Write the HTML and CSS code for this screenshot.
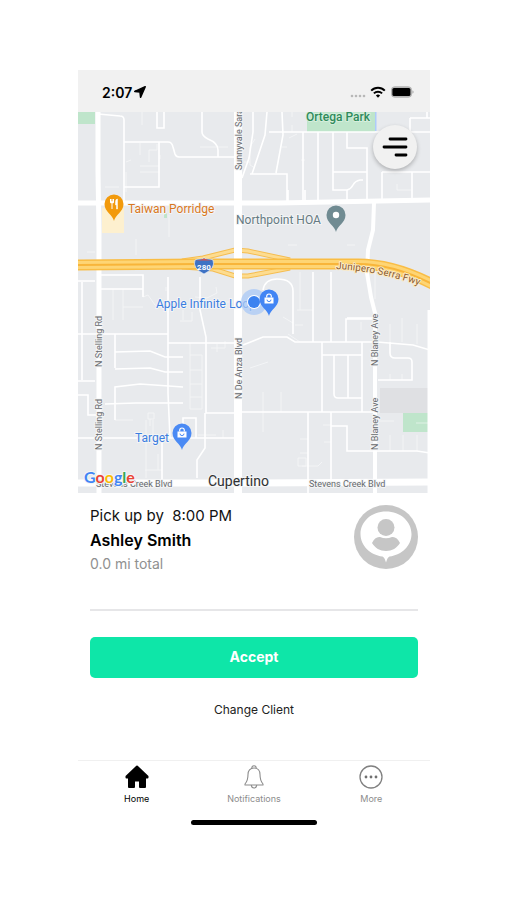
FILE: index.html
```
<!DOCTYPE html>
<html lang="en">

<head>
  <meta charset="UTF-8">
  <meta name="viewport" content="width=device-width, initial-scale=1.0">
  <title>Pick up</title>
  <link rel="stylesheet" href="styles.css">
</head>

<body>
  <div class="phone">
    <header class="status-bar">
      <div class="status-time">
        <span>2:07</span>
        <svg width="12" height="12" viewBox="0 0 12 12" aria-hidden="true">
          <path d="M11.2.8 6.6 11.2 6 6 .8 5.4z" fill="#000" stroke="#000" stroke-width="1.6" stroke-linejoin="round"/>
        </svg>
      </div>
      <div class="status-icons">
        <svg width="16" height="12" viewBox="0 0 16 12" aria-hidden="true">
          <g fill="#b8b8b8">
            <circle cx="2" cy="10" r="1.3"/>
            <circle cx="6" cy="10" r="1.3"/>
            <circle cx="10" cy="10" r="1.3"/>
            <circle cx="14" cy="10" r="1.3"/>
          </g>
        </svg>
        <svg width="16" height="12" viewBox="0 0 16 12" aria-hidden="true">
          <g fill="none" stroke="#000" stroke-width="2">
            <path d="M1.2 4.6a9.6 9.6 0 0 1 13.6 0"/>
            <path d="M3.9 7.4a5.8 5.8 0 0 1 8.2 0"/>
          </g>
          <path d="M8 11.7 5.9 9.5a3 3 0 0 1 4.2 0z"/>
        </svg>
        <svg width="24" height="12" viewBox="0 0 24 12" aria-hidden="true">
          <rect x="1.500" y=".8" width="20" height="10.4" rx="3" fill="#b5b5b5" stroke="#b5b5b5"/>
          <rect x="2.400" y="2" width="18" height="8" rx="1.6"/>
          <path d="M22.400 4.2q1.200.6 1.200 1.8t-1.200 1.8z" fill="#a9a9a9"/>
        </svg>
      </div>
    </header>

    <div class="map">
      <svg class="map-canvas" viewBox="0 0 352 381" role="img" aria-label="Map of Cupertino">
        <rect width="352" height="381" fill="#e8eaed"/>

        <!-- parks and blocks -->
        <g fill="#bfe5cb">
          <path d="M0 0h17v12H0z"/>
          <path d="M229 0h68v20h-68z"/>
          <path d="M325 301h26v19h-26z"/>
          <path d="M86 101h3v5h-3z"/>
        </g>
        <path d="M297 0h1.5v19H297z" fill="#aecbfa"/>
        <path d="M302 276h50v25h-50z" fill="#dfe0e3"/>
        <path d="M24 96h22v25H24z" fill="#fdf0cf"/>

        <!-- side streets -->
        <g class="street-thin">
          <path d="M64 0v13M62 31v12M62 54h19M62 60h20M71 38h8v-6M71 38v12M122 35h28M82 47v-4M48 50l5-2"/>
          <path d="M172 50h-6M177 27l-5 8v18l5 3M204 35h5M214 13v7M214 0v5M227 48h-4M211 26l8-4M319 78h14M319 72v6"/>
          <path d="M91 103v22M86 103v-6M219 133h-9M277 133h-8M48 60v20M58 127v16M9 140h8M27 75h14"/>
          <path d="M65 185l5-2 7 10 12 4M88 179v-4M117 185l12 1 10-5-1-6M155 190h-10v6M35 177v31M45 177v31M45 195h20"/>
          <path d="M112 231v66M112 243h12v54h-12M112 258h12M112 272h12M112 285h12M102 209h12v-9M105 198v10M133 236h14v-7M139 232v8"/>
          <path d="M70 301h6v6h-6zM72 307v7M68 308v58M67 358h17M75 326v-18M80 342v16M145 326v-8M120 323h18"/>
          <path d="M185 280v40M203 280v20M172 256l18-6M210 222l12 8M217 213h8M205 205l10 6M222 341h8M222 346h6v8h-8v-8zM224 354h16l4-4M222 327h8M245 313h8M246 330h7"/>
          <path d="M312 323v16M325 323v16M339 323v16M324 206v24M312 212v18M339 212v20M324 268v-6M312 268v-6M300 309h16M338 311h14M283 210v8"/>
          <path d="M297 158v29M222 160v38M37 308h18M153 140h8M235 198h-16"/>
        </g>
        <g class="street">
          <path d="M20 2l22 2q4 0 4 4v83M46 30h44q4 0 5 5l2 7q1 3 4 3h56M79 0v16h7V0M124 0v20q0 4 6 7 10 4 10 11v7M81 30v45H46"/>
          <path d="M175 0v20l-4 26-7 20M189 0l-2 23-13 39M204 0l1 23-7 38M172 62h37v29M191 20h161M240 20v71M225 20v71M255 20v58h14q4-1 6-5 2-4 7-5h3M269 20v16h20v55M255 60h34"/>
          <path d="M304 60h48M304 60v30M334 60v30M332 6h20M349 0v6M332 6v14M210 78v13M227 78v13M269 78v13"/>
          <path d="M235 160v70M253 160v70M185 178q2-11 14-11 16 0 16 12v43M269 206h28M0 169h17M4 170v98M22 163h43v22M22 177h43"/>
          <path d="M0 222h90M37 222v34M37 240l35-1 15 6h18M37 257l35-1 15 4h18M37 308v-33l25-3 43 3M27 292l31-1h47"/>
          <path d="M90 165v116l2 45M90 231h66M122 165v33l6 27v76h29M17 269H0M0 283h10v20h10M0 326h156M127 301v35l-8 12v18M105 320v-14h13v20M84 326v42"/>
          <path d="M165 233l20-8h24l8 5h82l36 3 17 5M244 230v70M244 243h40M284 230v70M256 243v39q0 4 4 4h24M270 243v43M163 300h134M268 230v-23h29"/>
          <path d="M312 230v11q0 5 5 5h13q4 0 4 4v18h-34M230 300v81M253 300v68M253 314h16v25h70l13 2"/>
        </g>

        <!-- freeway ramps -->
        <g class="ramp-edge">
          <path d="M104 149l21-3 32-8 13 1 42 9M104 155l31 2 22 7h13l42-8"/>
        </g>
        <g class="ramp">
          <path d="M104 149l21-3 32-8 13 1 42 9M104 155l31 2 22 7h13l42-8"/>
        </g>

        <!-- main roads -->
        <g fill="none" stroke="#fff">
          <path d="M20 0v60l1 60v261" stroke-width="5"/>
          <path d="M296 91l-1 27-5 20-1 23 4 24 4 16v180" stroke-width="4"/>
          <path d="M160 0v381" stroke-width="8"/>
          <path d="M0 91h200l152-3" stroke-width="5"/>
          <path d="M0 371h160l192-1" stroke-width="7"/>
          <path d="M351 198v183" stroke-width="3"/>
        </g>

        <!-- freeway -->
        <g fill="none">
          <path d="M0 153l120-1h160q36 0 76 21" stroke="#f9bd45" stroke-width="11"/>
          <path d="M0 153l120-1h160q36 0 76 21" stroke="#fed574" stroke-width="8"/>
          <path d="M0 153l120-1h160q36 0 76 21" stroke="#f8b53a" stroke-width="2"/>
        </g>
        <path d="M117 148q2-1 4-1 3 0 5-1 2 1 5 1 2 0 4 1 3 8-9 14-12-6-9-14z" fill="#3e72c4" stroke="#fff" stroke-width=".6"/>
        <path d="M117.500 148.500q5 0 8.500-2 4 2 8.500 2z" fill="#d9534a"/>
        <text class="shield" x="126" y="158" text-anchor="middle">280</text>

        <!-- road names -->
        <path id="fwy-line" d="M258 157q48 2 98 22" fill="none"/>
        <g class="road-name">
          <text transform="translate(164 58) rotate(-90)">Sunnyvale Saratoga Rd</text>
          <text transform="translate(24 255) rotate(-90)">N Stelling Rd</text>
          <text transform="translate(24 338) rotate(-90)">N Stelling Rd</text>
          <text transform="translate(164 287) rotate(-90)">N De Anza Blvd</text>
          <text transform="translate(300 254) rotate(-90)">N Blaney Ave</text>
          <text transform="translate(300 338) rotate(-90)">N Blaney Ave</text>
          <text x="18" y="375">Stevens Creek Blvd</text>
          <text x="231" y="375">Stevens Creek Blvd</text>
        </g>
        <text class="fwy-name"><textPath href="#fwy-line">Junipero Serra Fwy</textPath></text>

        <!-- places -->
        <g class="place">
          <text class="park" x="228" y="9">Ortega Park</text>
          <text class="food" x="50" y="101">Taiwan Porridge</text>
          <text class="civic" x="158" y="112">Northpoint HOA</text>
          <text class="shop" x="78" y="196">Apple Infinite Loop</text>
          <text class="shop" x="57" y="330">Target</text>
        </g>
        <text class="city" x="130" y="374">Cupertino</text>

        <!-- current location -->
        <circle cx="176" cy="190" r="13" fill="#a9c8f5" opacity=".75"/>
        <circle cx="176" cy="190" r="7" fill="#fff"/>
        <circle cx="176" cy="190" r="6" fill="#3b82f0"/>

        <!-- pins -->
        <defs>
          <path id="pin" d="M0 17C-1 11-9.500 8-9.500 0a9.500 9.500 0 0 1 19 0C9.500 8 1 11 0 17z"/>
          <g id="bag">
            <path d="M-4.500-1.500h9v6h-9z" fill="#fff"/>
            <path d="M-2.300-1.500v-1.200a2.300 2.300 0 0 1 4.600 0v1.200" fill="none" stroke="#fff" stroke-width="1.2"/>
            <path d="M-2 .6a2 2 0 0 0 4 0" fill="none" stroke="#4a8af4"/>
          </g>
        </defs>
        <g transform="translate(36 92)">
          <use href="#pin" fill="#f29a0c"/>
          <path d="M-3.500-5v3.500M-2-5v3.500M-.5-5v3.500M-2-2v7" fill="none" stroke="#fff"/>
          <path d="M-3.500-2.500h3v1.500h-3zM3.500-5v10h-1V1H1.500v-3q0-3 2-3z" fill="#fff" stroke="#fff" stroke-width=".5"/>
        </g>
        <g transform="translate(258 103)">
          <use href="#pin" fill="#708b92"/>
          <circle r="3.200" fill="#fff"/>
        </g>
        <g transform="translate(191 187)">
          <use href="#pin" fill="#4285f4"/>
          <use href="#bag"/>
        </g>
        <g transform="translate(104 321)">
          <use href="#pin" fill="#4a8af4"/>
          <use href="#bag"/>
        </g>

        <text class="google" x="6" y="371"><tspan fill="#4285f4">G</tspan><tspan fill="#ea4335">o</tspan><tspan fill="#fbbc05">o</tspan><tspan fill="#4285f4">g</tspan><tspan fill="#34a853">l</tspan><tspan fill="#ea4335">e</tspan></text>
      </svg>

      <button class="menu-button" type="button" aria-label="Menu">
        <svg width="26" height="20" viewBox="0 0 26 20" aria-hidden="true">
          <path d="M8 2h16M2 10h22M14 18h10" fill="none" stroke="#000" stroke-width="2.800" stroke-linecap="round"/>
        </svg>
      </button>
    </div>

    <main class="ride">
      <section class="client">
        <div class="client-info">
          <p class="pickup">Pick up by&nbsp; 8:00 PM</p>
          <h1 class="client-name">Ashley Smith</h1>
          <p class="distance">0.0 mi total</p>
        </div>
        <svg class="avatar" width="64" height="64" viewBox="0 0 64 64" aria-hidden="true">
          <circle cx="32" cy="32" r="32" fill="#c6c6c6"/>
          <path d="M32 6.500c14.500 0 25.500 10 25.500 22.500 0 11.500-9.500 21-22 22.500-2 .8-2.500 3.500-3.500 6-1-2.500-1.500-5.200-3.500-6C16 50 6.500 40.500 6.500 29 6.500 16.500 17.500 6.500 32 6.500z" fill="#fff"/>
          <circle cx="32" cy="22.500" r="8.500" fill="#c6c6c6"/>
          <path d="M18 38c2-4.500 5-6.500 8-6 4 1.600 8 1.600 12 0 3-.5 6 1.500 8 6-3 5-8 8-14 8s-11-3-14-8z" fill="#c6c6c6"/>
        </svg>
      </section>
      <hr class="divider">
      <button class="accept" type="button">Accept</button>
      <button class="change" type="button">Change Client</button>
    </main>

    <nav class="tab-bar">
      <a class="tab active" href="#home">
        <svg width="24" height="24" viewBox="0 0 24 24" aria-hidden="true">
          <path d="M12 1.500 22.500 11.500v1H20V22h-5v-6.500H9V22H4v-9.500H1.500v-1z" fill="#000" stroke="#000" stroke-width="2" stroke-linejoin="round"/>
        </svg>
        <span>Home</span>
      </a>
      <a class="tab" href="#notifications">
        <svg width="24" height="24" viewBox="0 0 24 24" aria-hidden="true">
          <g fill="none" stroke="#8c8c8c" stroke-width="1.100" stroke-linejoin="round">
            <path d="M12 3c4 0 6 3 6 6.500 0 5 .8 7 3 9.500v1H3v-1c2.200-2.500 3-4.500 3-9.500C6 6 8 3 12 3z"/>
            <path d="M9.800 3.200C9.800 0 14.200 0 14.200 3.200M9.300 20c.3 4 5.100 4 5.400 0"/>
          </g>
        </svg>
        <span>Notifications</span>
      </a>
      <a class="tab" href="#more">
        <svg width="24" height="24" viewBox="0 0 24 24" aria-hidden="true">
          <circle cx="12" cy="12" r="11" fill="none" stroke="#808080" stroke-width="1.300"/>
          <g fill="#707070">
            <circle cx="7" cy="12" r="1.400"/>
            <circle cx="12" cy="12" r="1.400"/>
            <circle cx="17" cy="12" r="1.400"/>
          </g>
        </svg>
        <span>More</span>
      </a>
    </nav>
    <div class="home-indicator"></div>
  </div>
</body>

</html>
```
FILE: styles.css
```
* {
  box-sizing: border-box;
}

body {
  margin: 0;
  padding: 70px 77px 70px 78px;
  background: #fff;
  color: #111;
  font-family: Inter, "Liberation Sans", sans-serif;
}

button {
  border: none;
  font-family: inherit;
  cursor: pointer;
}

.phone {
  display: flex;
  flex-direction: column;
}

.status-bar {
  display: flex;
  align-items: center;
  justify-content: space-between;
  height: 42px;
  padding: 2px 16px 0 24px;
  background: #f1f1f1;
}

.status-time,
.status-icons {
  display: flex;
  align-items: center;
  gap: 4px;
}

.status-time {
  gap: 2px;
  color: #000;
  font-size: 14px;
  font-weight: 600;
}

/* map */
.map {
  position: relative;
}

.map-canvas {
  display: block;
  width: 100%;
  height: auto;
  font-family: Roboto, "Liberation Sans", sans-serif;
}

.street,
.street-thin,
.ramp,
.ramp-edge {
  fill: none;
  stroke: #fff;
  stroke-width: 1.6;
}

.street-thin {
  stroke-width: 1;
  opacity: 0.5;
}

.ramp-edge {
  stroke: #f5bd50;
  stroke-width: 5;
}

.ramp {
  stroke: #fddc90;
  stroke-width: 3;
}

.map-canvas text {
  paint-order: stroke;
  stroke: #f4f5f6;
  stroke-width: 2px;
  stroke-linejoin: round;
}

.road-name {
  font-size: 9px;
  fill: #66696d;
}

.fwy-name {
  font-size: 10px;
  fill: #8a5a32;
}

.map-canvas .fwy-name {
  stroke: #fdebc4;
}

.map-canvas .shield {
  font-size: 8px;
  font-weight: 700;
  fill: #fff;
  stroke: none;
}

.place {
  font-size: 12px;
}

.park {
  font-weight: 500;
  fill: #2f8a5b;
}

.map-canvas .park {
  stroke: #d5eedd;
}

.food {
  fill: #d9781e;
}

.civic {
  fill: #657a82;
}

.shop {
  fill: #3b7de0;
}

.city {
  font-size: 14px;
  fill: #2f3133;
}

.google {
  font-family: Lato, sans-serif;
  font-size: 16px;
  font-weight: 700;
}

.menu-button {
  position: absolute;
  top: 13px;
  right: 13px;
  display: flex;
  align-items: center;
  justify-content: center;
  width: 44px;
  height: 44px;
  padding: 0;
  border-radius: 50%;
  background: #f1f1f1;
  box-shadow: 0 2px 4px rgba(0, 0, 0, 0.25);
}

/* ride details */
.ride {
  display: flex;
  flex-direction: column;
  padding: 11px 12px 0;
}

.client {
  display: flex;
  justify-content: space-between;
  align-items: flex-start;
  min-height: 105px;
}

.client p,
.client-name {
  margin: 0;
  line-height: 24px;
}

.client .pickup {
  font-size: 15px;
}

.client-name {
  color: #000;
  font-size: 16px;
  font-weight: 600;
}

.client .distance {
  color: #909090;
  font-size: 14px;
}

.avatar {
  margin-top: 1px;
}

.divider {
  width: 100%;
  height: 2px;
  margin: 0;
  border: none;
  background: #e6e6e8;
}

.accept {
  height: 41px;
  margin-top: 26px;
  padding: 0 0 2px;
  border-radius: 5px;
  background: #0ee6a8;
  color: #fff;
  font-size: 14px;
  font-weight: 700;
}

.change {
  align-self: center;
  height: 24px;
  margin-top: 19px;
  padding: 0 12px;
  background: none;
  color: #222;
  font-size: 12px;
}

/* bottom tabs */
.tab-bar {
  display: flex;
  margin-top: 39px;
  padding-top: 4px;
  border-top: 1px solid #f0f0f0;
}

.tab {
  flex: 1;
  display: flex;
  flex-direction: column;
  align-items: center;
  gap: 4px;
  color: #8c8c8c;
  font-size: 9px;
  line-height: 12px;
  text-decoration: none;
}

.tab.active {
  color: #000;
}

.home-indicator {
  align-self: center;
  width: 126px;
  height: 5px;
  margin-top: 15px;
  border-radius: 3px;
  background: #000;
}
```
